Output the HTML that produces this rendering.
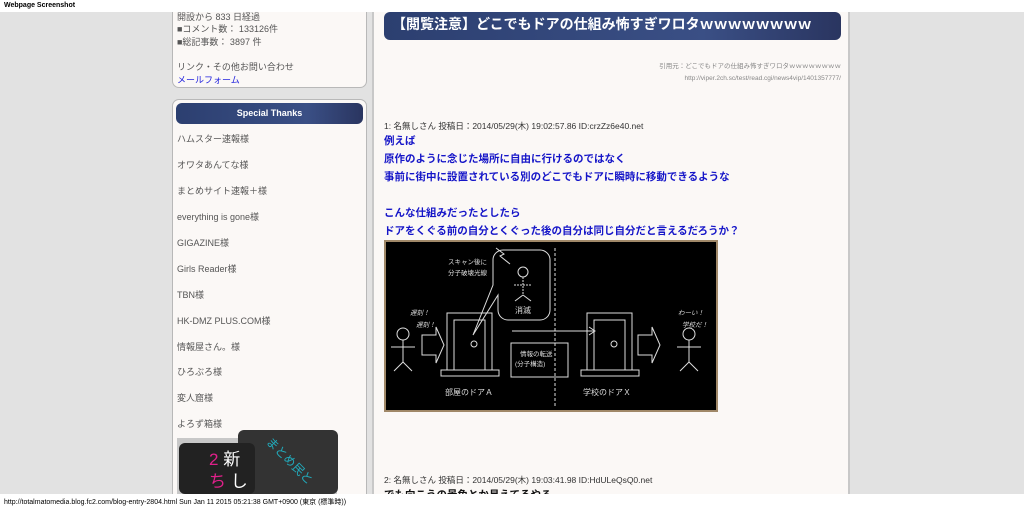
<!DOCTYPE html>
<html><head><meta charset="utf-8"><style>
*{margin:0;padding:0;box-sizing:border-box}
html,body{width:1024px;height:506px;overflow:hidden}
body{background:#e2e2e2;font-family:"Liberation Sans","Noto Sans CJK JP",sans-serif;position:relative}
.top{position:absolute;left:0;top:0;width:1024px;height:12px;background:#fff;font-size:7px;padding:2px 4px;font-weight:bold;z-index:5}
.bot{position:absolute;left:0;top:494px;width:1024px;height:12px;background:#fff;font-size:7px;padding:3px 4px;z-index:5}
.box{position:absolute;background:#fbf8f6;border:1px solid #b8b8b8;border-radius:7px}
.lt{font-size:9px;color:#555;position:absolute;left:177px;white-space:nowrap}
.hdr{background:linear-gradient(90deg,#2c3f70,#3a4f85 70%,#2a3560);color:#fff;font-weight:bold;border-radius:6px;position:absolute;white-space:nowrap}
.main{position:absolute;left:372px;top:12px;width:478px;height:482px;background:#fbf8f6;border-left:2px solid #c8c8c8;border-right:2px solid #c8c8c8}
.b{color:#1515c8;font-weight:bold;font-size:10.5px;position:absolute;left:384px;white-space:nowrap}
.m{font-size:8.5px;color:#333;position:absolute;left:384px;white-space:nowrap}
</style></head><body>
<div class="top">Webpage Screenshot</div>
<div class="box" style="left:172px;top:-10px;width:195px;height:98px"></div>
<div class="lt" style="top:10px">開設から 833 日経過</div>
<div class="lt" style="top:22px">■コメント数： 133126件</div>
<div class="lt" style="top:35px">■総記事数： 3897 件</div>
<div class="lt" style="top:60px">リンク・その他お問い合わせ</div>
<div class="lt" style="top:73px;color:#2222dd">メールフォーム</div>
<div class="box" style="left:172px;top:99px;width:195px;height:420px"></div>
<div class="hdr" style="left:176px;top:103px;width:187px;height:21px;font-size:9px;text-align:center;line-height:21px">Special Thanks</div>
<div class="lt" style="top:132px">ハムスター速報様</div>
<div class="lt" style="top:158px">オワタあんてな様</div>
<div class="lt" style="top:184px">まとめサイト速報＋様</div>
<div class="lt" style="top:210px">everything is gone様</div>
<div class="lt" style="top:236px">GIGAZINE様</div>
<div class="lt" style="top:262px">Girls Reader様</div>
<div class="lt" style="top:288px">TBN様</div>
<div class="lt" style="top:314px">HK-DMZ PLUS.COM様</div>
<div class="lt" style="top:340px">情報屋さん。様</div>
<div class="lt" style="top:365px">ひろぶろ様</div>
<div class="lt" style="top:391px">変人窟様</div>
<div class="lt" style="top:417px">よろず箱様</div>
<div style="position:absolute;left:177px;top:438px;width:160px;height:56px;background:#c8c8c8"></div>
<div style="position:absolute;left:238px;top:430px;width:100px;height:64px;background:#333;border-radius:6px;overflow:hidden"><div style="color:#2ab;font-size:12px;transform:rotate(45deg);position:absolute;left:22px;top:22px;white-space:nowrap">まとめ民と</div></div>
<div style="position:absolute;left:179px;top:443px;width:76px;height:51px;background:#222;border-radius:6px;color:#fff;font-size:17px;padding:6px 0 0 30px;line-height:22px"><span style="color:#e0208a">2</span> 新<br><span style="color:#e0208a">ち</span> し</div>
<div class="main"></div>
<div class="hdr" style="left:384px;top:12px;width:457px;height:28px;font-size:14px;padding-left:8px;line-height:24px">【閲覧注意】どこでもドアの仕組み怖すぎワロタｗｗｗｗｗｗｗｗ</div>
<div style="position:absolute;right:183px;top:61px;font-size:6.5px;color:#888;text-align:right;line-height:12px">引用元：どこでもドアの仕組み怖すぎワロタｗｗｗｗｗｗｗｗ<br>http://viper.2ch.sc/test/read.cgi/news4vip/1401357777/</div>
<div class="m" style="top:120px">1: 名無しさん 投稿日：2014/05/29(木) 19:02:57.86 ID:crzZz6e40.net</div>
<div class="b" style="top:133px">例えば</div>
<div class="b" style="top:151px">原作のように念じた場所に自由に行けるのではなく</div>
<div class="b" style="top:169px">事前に街中に設置されている別のどこでもドアに瞬時に移動できるような</div>
<div class="b" style="top:205px">こんな仕組みだったとしたら</div>
<div class="b" style="top:223px">ドアをくぐる前の自分とくぐった後の自分は同じ自分だと言えるだろうか？</div>
<svg style="position:absolute;left:384px;top:240px" width="334" height="172" viewBox="0 0 334 172">
<rect x="1" y="1" width="332" height="170" fill="#000" stroke="#a08868" stroke-width="2"/>
<g stroke="#ddd" fill="none" stroke-width="1">
<line x1="171" y1="8" x2="171" y2="166" stroke-dasharray="3 2"/>
<rect x="63" y="73" width="45" height="57"/><rect x="70" y="80" width="31" height="50"/><rect x="57" y="130" width="58" height="6"/>
<rect x="203" y="73" width="45" height="57"/><rect x="210" y="80" width="31" height="50"/><rect x="197" y="130" width="58" height="6"/>
<circle cx="90" cy="104" r="3"/><circle cx="230" cy="104" r="3"/>
<path d="M124 10h32a10 10 0 0 1 10 10v50a10 10 0 0 1-10 10h-32a10 10 0 0 1-10-10v-15l-25 40 20-50v-25a10 10 0 0 1 10-10z"/>
<path d="M112 8l8 6-4 2 10 8"/>
<rect x="127" y="103" width="57" height="34"/>
<path d="M128 91h83M205 87l6 4-6 4"/>
<path d="M38 95h14v-8l8 18-8 18v-8H38z"/>
<path d="M254 95h14v-8l8 18-8 18v-8h-14z"/>
<circle cx="19" cy="94" r="6"/><path d="M19 100v22M7 107h24M19 122l-9 9M19 122l9 9"/>
<circle cx="305" cy="94" r="6"/><path d="M305 100v22M293 107h24M305 122l-9 9M305 122l9 9"/>
<circle cx="139" cy="32" r="5"/><path d="M139 37v18M130 45h18" stroke-dasharray="2 1"/><path d="M139 55l-8 6M139 55l8 6"/>
</g>
<g fill="#ddd" font-size="6.5">
<text x="64" y="24">スキャン後に</text><text x="64" y="35">分子破壊光線</text>
<text x="131" y="73" font-size="8">消滅</text><text x="136" y="116">情報の転送</text><text x="131" y="126">(分子構造)</text>
<text x="26" y="75" font-style="italic">遅刻！</text><text x="32" y="87" font-style="italic">遅刻！</text>
<text x="294" y="75" font-style="italic">わーい！</text><text x="298" y="87" font-style="italic">学校だ！</text>
<text x="61" y="155" font-size="8">部屋のドアＡ</text><text x="199" y="155" font-size="8">学校のドアＸ</text>
</g></svg>
<div class="m" style="top:474px">2: 名無しさん 投稿日：2014/05/29(木) 19:03:41.98 ID:HdULeQsQ0.net</div>
<div class="b" style="top:487px;color:#111">でも向こうの景色とか見えてるやろ</div>
<div class="bot">http://totalmatomedia.blog.fc2.com/blog-entry-2804.html Sun Jan 11 2015 05:21:38 GMT+0900 (東京 (標準時))</div>
</body></html>
